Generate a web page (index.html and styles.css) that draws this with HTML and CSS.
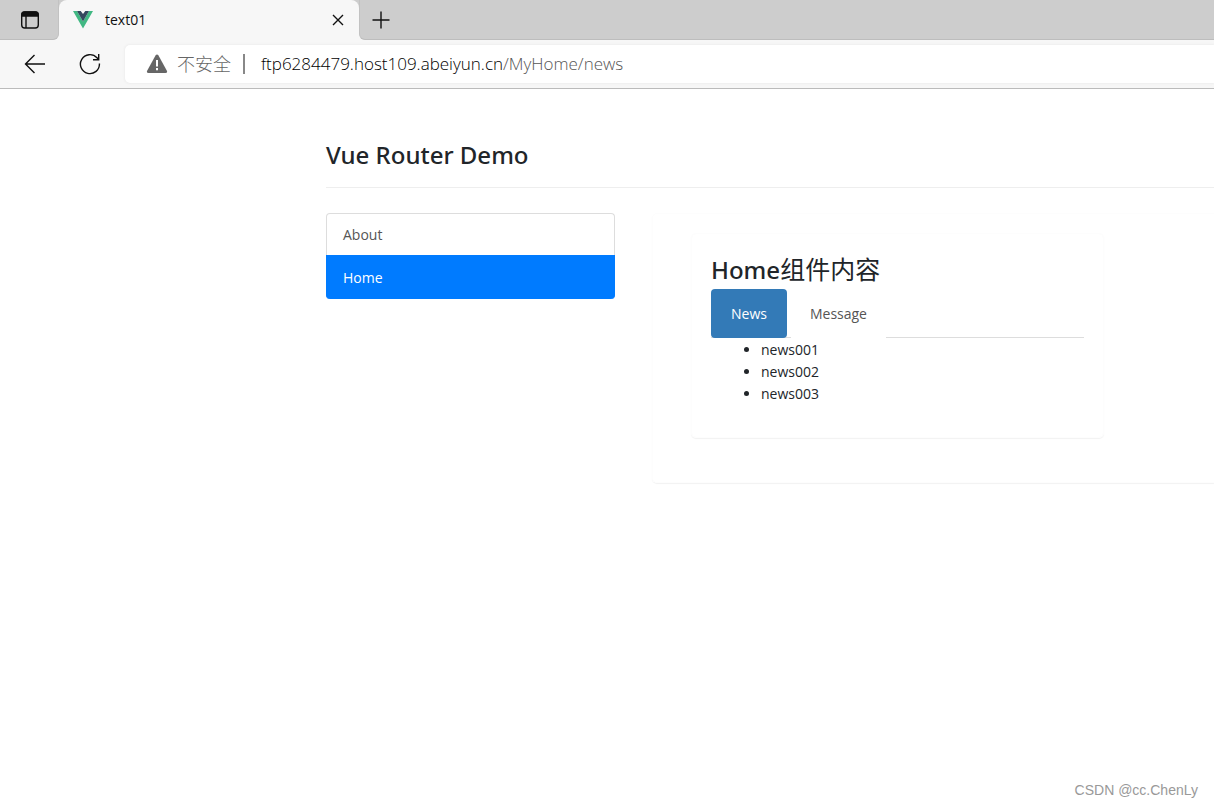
FILE: index.html
```html
<!DOCTYPE html>
<html lang="zh-CN">
<head>
<meta charset="utf-8">
<title>text01</title>
<link rel="stylesheet" href="styles.css">
</head>
<body>
<header class="browser">
  <div class="tab-strip">
    <div class="strip-start">
      <button class="icon-button" aria-label="Tab actions">
        <svg width="20" height="20" viewBox="0 0 20 20" fill="none" stroke="#111" stroke-width="1.4"><rect x="1.7" y="2" width="16.6" height="16" rx="3"/><path d="M2 4.5Q2 2 4.5 2h11Q18 2 18 4.5V6H2z" fill="#111"/><path d="M6 6v12"/></svg>
      </button>
    </div>
    <div class="tab-frame">
      <div class="tab">
        <svg width="20" height="18" viewBox="0 0 20 18"><path d="M0 0h4l6 10.4L16 0h4L10 17.5z" fill="#41b883"/><path d="M4 0h3.700L10 3l2.300-3H16l-6 10.400z" fill="#34495e"/></svg>
        <span class="tab-title">text01</span>
        <button class="icon-button" aria-label="Close tab">
          <svg width="12" height="12" viewBox="0 0 12 12" fill="none" stroke="#111" stroke-width="1.4"><path d="M1 1l10 10M11 1L1 11"/></svg>
        </button>
      </div>
    </div>
    <div class="strip-end">
      <button class="icon-button" aria-label="New tab">
        <svg width="18" height="18" viewBox="0 0 18 18" fill="none" stroke="#111" stroke-width="1.4"><path d="M9 .5v17M.5 9h17"/></svg>
      </button>
    </div>
  </div>
  <div class="toolbar">
    <button class="icon-button nav-button" aria-label="Back">
      <svg width="22" height="20" viewBox="0 0 22 20" fill="none" stroke="#111" stroke-width="1.4"><path d="M10.5 1L1.5 10l9 9M1.5 10H21"/></svg>
    </button>
    <button class="icon-button nav-button" aria-label="Refresh">
      <svg width="22" height="22" viewBox="0 0 22 22" fill="none" stroke="#111" stroke-width="1.4"><path d="M20.4 10.5A9.5 9.5 0 1 1 18 4.8L19.5 6.5"/><path d="M19.7 1v5.7H14"/></svg>
    </button>
    <div class="address">
      <svg width="22" height="20" viewBox="0 0 22 20"><path d="M9.5 1.6Q11-.6 12.500 1.600L21 17Q21.500 19 19.500 19h-17Q.5 19 1 17z" fill="#666"/><path d="M11 6v6.500M11 14v2.200" stroke="#fff" stroke-width="2"/></svg>
      <span class="insecure">不安全</span>
      <span class="divider"></span>
      <span class="url">ftp6284479.host109.abeiyun.cn<span class="path">/MyHome/news</span></span>
    </div>
  </div>
</header>
<main class="page">
  <h2 class="page-title">Vue Router Demo</h2>
  <div class="columns">
    <nav class="list-group">
      <a class="list-item" href="#about">About</a>
      <a class="list-item active" href="#home">Home</a>
    </nav>
    <section class="panel outer">
      <div class="panel inner">
        <h2 class="panel-title">Home<span class="han">组件内容</span></h2>
        <nav class="tabs">
          <a class="tab-link selected" href="#news">News</a>
          <a class="tab-link" href="#message">Message</a>
        </nav>
        <ul class="news">
          <li>news001</li>
          <li>news002</li>
          <li>news003</li>
        </ul>
      </div>
    </section>
  </div>
</main>
<footer class="credit">CSDN @cc.ChenLy</footer>
</body>
</html>
```
FILE: styles.css
```css
* { box-sizing: border-box; }
body {
  margin: 0;
  min-height: 100vh;
  display: flex;
  flex-direction: column;
  overflow-x: hidden;
  background: #fff;
  color: #212529;
  font: 14px/22px "Open Sans", "Noto Sans CJK SC", sans-serif;
}
a { text-decoration: none; }
.icon-button {
  display: flex;
  padding: 0;
  border: 0;
  background: none;
}
.browser {
  background: #f7f7f7;
  border-bottom: 1px solid #bbb;
}
.tab-strip { display: flex; height: 40px; }
.strip-start, .strip-end {
  display: flex;
  align-items: center;
  background: #cdcdcd;
  border-bottom: 1px solid #bdbdbd;
}
.strip-start {
  width: 59px;
  padding-left: 20px;
  border-bottom-right-radius: 6px;
  border-right: 1px solid #c2c2c2;
}
.strip-end {
  flex: 1;
  padding-left: 12px;
  border-bottom-left-radius: 6px;
  border-left: 1px solid #c2c2c2;
}
.tab-frame {
  width: 300px;
  background: linear-gradient(#cdcdcd 20px, #f7f7f7 20px);
}
.tab {
  display: flex;
  align-items: center;
  height: 100%;
  padding: 0 15px 0 14px;
  border-radius: 8px 8px 0 0;
  background: #f7f7f7;
}
.tab-title {
  flex: 1;
  margin-left: 12px;
  color: #111;
}
.toolbar {
  display: flex;
  align-items: center;
  height: 48px;
  padding-left: 24px;
}
.nav-button { width: 55px; }
.address {
  flex: 1;
  display: flex;
  align-items: center;
  height: 38px;
  margin-left: -9px;
  padding-left: 21px;
  border-radius: 5px 0 0 5px;
  background: #fff;
  box-shadow: 0 0 3px #e4e4e4;
  color: #000;
  font-size: 17px;
  font-weight: 300;
  white-space: nowrap;
}
.insecure {
  margin-left: 9px;
  color: #666;
  font-size: 18px;
}
.divider {
  width: 2px;
  height: 20px;
  margin: 0 16px 0 12px;
  background: #888;
}
.path { color: #555; }
.page { flex: 1; padding: 50px 0 0 326px; }
.page-title, .panel-title {
  margin: 0;
  font-family: "Noto Sans", "Noto Sans CJK SC", sans-serif;
  font-size: 24px;
  line-height: 32px;
  font-weight: 500;
}
.han {
  font-size: 25px;
  font-weight: 400;
}
.page-title {
  padding-bottom: 16px;
  border-bottom: 1px solid #eee;
}
.columns {
  display: flex;
  align-items: flex-start;
  gap: 37px;
  margin-top: 25px;
}
.list-group { width: 289px; }
.list-item {
  display: block;
  padding: 10px 16px 9px;
  border: 1px solid #ddd;
  border-bottom: 0;
  border-radius: 4px 4px 0 0;
  color: #555;
}
.list-item.active {
  padding: 11px 16px 10px;
  border-color: #007bff;
  border-radius: 0 0 4px 4px;
  background: #007bff;
  color: #fff;
}
.panel {
  border: 1px solid #fdfdfd;
  border-radius: 5px;
  box-shadow: 0 1px 1px #f2f2f2;
}
.outer {
  flex: 1;
  padding: 19px 0 44px 38px;
  border-right: 0;
  border-radius: 5px 0 0 5px;
}
.inner {
  width: 413px;
  padding: 19px;
}
.panel-title { height: 32px; }
.tabs {
  display: flex;
  gap: 4px;
  height: 49px;
  margin-top: 4px;
  border-bottom: 1px solid #ddd;
}
.tab-link {
  height: 49px;
  padding: 14px 19px;
  background: #fff;
  color: #555;
}
.tab-link.selected {
  padding: 14px 20px;
  border-radius: 4px;
  background: #337ab7;
  color: #fff;
}
.news {
  margin: 0;
  padding: 1px 0 13px 50px;
}
.credit {
  padding: 0 16px 6px;
  color: #999;
  font: 14px/22px "Liberation Sans", sans-serif;
  text-align: right;
}
```
